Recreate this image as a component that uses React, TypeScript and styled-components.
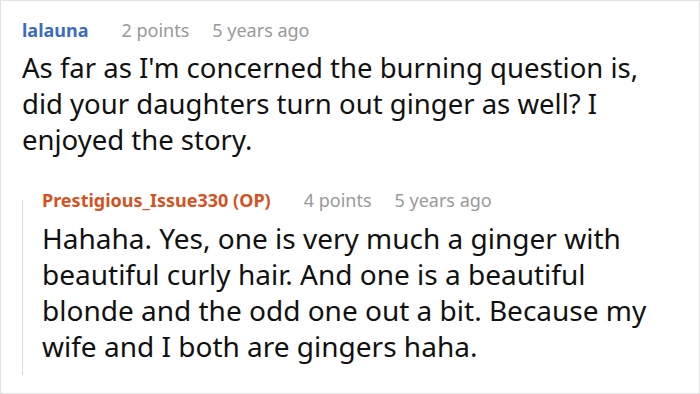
import React from "react";
import styled, { createGlobalStyle } from "styled-components";

const Global = createGlobalStyle`
  html, body { margin: 0; padding: 0; background: #fff; }
  body { font-family: "Noto Sans", "DejaVu Sans", sans-serif; }
`;

const Frame = styled.div`
  box-sizing: border-box;
  width: 700px;
  height: 394px;
  border: 1px solid #e2e2e2;
  padding: 17px 24px 0 21px;
  overflow: hidden;
`;

const Comment = styled.div<{ $reply?: boolean }>`
  display: flex;
  flex-direction: column;
  position: relative;
  ${(p) =>
    p.$reply
      ? `
    margin-top: 30px;
    padding: 0 0 11px 20px;
    &::before {
      content: "";
      position: absolute;
      left: 0;
      top: 12px;
      bottom: 0;
      width: 1px;
      background: #dcdcdc;
    }
  `
      : ""}
`;

const Meta = styled.div`
  display: flex;
  align-items: baseline;
  gap: 23px;
  font-size: 18px;
  line-height: 24px;
  margin-bottom: 8px;
  white-space: nowrap;
`;

const Author = styled.span<{ $op?: boolean }>`
  font-weight: 700;
  color: ${(p) => (p.$op ? "#d5521f" : "#3d6cbf")};
  margin-right: 10px;
`;

const Info = styled.span`
  color: #999;
`;

const Body = styled.p<{ $size?: number }>`
  margin: 0;
  font-size: ${(p) => p.$size ?? 27.5}px;
  line-height: 36px;
  color: #111;
`;

export default function App() {
  return (
    <>
      <Global />
      <Frame>
        <Comment>
          <Meta>
            <Author>lalauna</Author>
            <Info>2 points</Info>
            <Info>5 years ago</Info>
          </Meta>
          <Body>
            As far as I'm concerned the burning question is, did your daughters turn out ginger as well? I enjoyed the
            story.
          </Body>
        </Comment>
        <Comment $reply>
          <Meta>
            <Author $op>Prestigious_Issue330 (OP)</Author>
            <Info>4 points</Info>
            <Info>5 years ago</Info>
          </Meta>
          <Body $size={28}>
            Hahaha. Yes, one is very much a ginger with beautiful curly hair. And one is a beautiful blonde and the odd
            one out a bit. Because my wife and I both are gingers haha.
          </Body>
        </Comment>
      </Frame>
    </>
  );
}
